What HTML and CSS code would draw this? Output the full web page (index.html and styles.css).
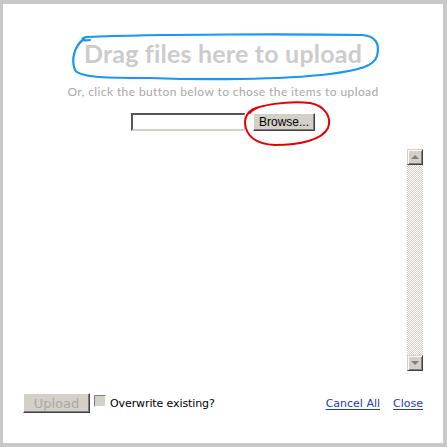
FILE: index.html
```html
<!DOCTYPE html>
<html>
<head>
<meta charset="utf-8">
<link rel="stylesheet" href="styles.css">
</head>
<body>
<div class="panel">
  <h1 class="title">Drag files here to upload</h1>
  <p class="sub">Or, click the button below to chose the items to upload</p>
  <div class="filerow">
    <span class="field"></span>
    <span class="btn browse">Browse...</span>
  </div>
  <div class="list">
    <div class="list-body"></div>
    <div class="sbar">
      <div class="sbtn"><span class="arr up"></span></div>
      <div class="track"></div>
      <div class="sbtn"><span class="arr down"></span></div>
    </div>
  </div>
  <div class="footer">
    <span class="btn upload">Upload</span>
    <span class="check"></span>
    <span class="ow">Overwrite existing?</span>
    <span class="spacer"></span>
    <a class="lnk" href="#">Cancel All</a>
    <a class="lnk" href="#">Close</a>
  </div>
  <svg class="marks" width="447" height="447" viewBox="0 0 447 447">
    <path d="M 90 40 C 82 41, 80 39, 86 37 C 160 34, 300 34, 362 35 C 376 36, 380 44, 377 56 C 374 66, 360 70, 330 74 C 280 80, 200 80, 150 78 C 110 78, 80 78, 75 70 C 71 60, 74 46, 84 39" fill="none" stroke="#1597f3" stroke-width="2.2" stroke-linecap="round"/>
    <path d="M 250 113 C 256 104, 290 101, 310 103 C 325 106, 332 117, 328 128 C 322 140, 300 145, 275 145 C 256 144, 246 136, 245 123 C 245 114, 250 108, 264 106" fill="none" stroke="#e80000" stroke-width="2" stroke-linecap="round"/>
  </svg>
</div>
</body>
</html>
```
FILE: styles.css
```css
html, body {
  margin: 0;
  padding: 0;
  background: #c8c8c8;
}
body {
  width: 447px;
  height: 447px;
  overflow: hidden;
}
.panel {
  position: relative;
  margin: 4px 4px 4px 3px;
  width: 440px;
  height: 439px;
  background: #fff;
  display: flex;
  flex-direction: column;
  align-items: center;
}
.title {
  margin: 34px 0 0 0;
  font-family: "Lato", "DejaVu Sans", sans-serif;
  font-weight: 700;
  font-size: 25px;
  line-height: 30px;
  color: #cccccc;
  letter-spacing: 0.2px;
}
.sub {
  margin: 17px 0 0 0;
  font-family: "Lato", "DejaVu Sans", sans-serif;
  font-size: 12px;
  line-height: 14px;
  color: #a8a8a8;
  letter-spacing: 0.4px;
}
.filerow {
  margin-top: 14px;
  display: flex;
  gap: 8px;
  height: 18px;
}
.field {
  width: 111px;
  height: 14px;
  background: #fff;
  border-top: 2px solid #555;
  border-left: 2px solid #555;
  border-right: 1px solid #d4d0c8;
  border-bottom: 2px solid #d4d0c8;
}
.btn {
  display: flex;
  align-items: center;
  justify-content: center;
  background: #d4d0c8;
  box-sizing: border-box;
  border-top: 1px solid #fff;
  border-left: 1px solid #fff;
  border-right: 1px solid #404040;
  border-bottom: 1px solid #404040;
  box-shadow: inset -1px -1px 0 #808080;
}
.browse {
  width: 62px;
  height: 18px;
  font-family: "Liberation Sans", Arial, sans-serif;
  font-size: 12px;
  color: #000;
}
.list {
  margin-top: 18px;
  width: 400px;
  height: 222px;
  display: flex;
}
.list-body {
  flex: 1;
}
.sbar {
  width: 16px;
  display: flex;
  flex-direction: column;
}
.sbtn {
  width: 16px;
  height: 16px;
  box-sizing: border-box;
  background: #d4d0c8;
  border-top: 1px solid #d4d0c8;
  border-left: 1px solid #d4d0c8;
  border-right: 1px solid #404040;
  border-bottom: 1px solid #404040;
  box-shadow: inset 1px 1px 0 #fff, inset -1px -1px 0 #808080;
  display: flex;
  align-items: center;
  justify-content: center;
}
.arr {
  width: 0;
  height: 0;
  border-left: 4px solid transparent;
  border-right: 4px solid transparent;
}
.arr.up {
  border-bottom: 4px solid #808080;
}
.arr.down {
  border-top: 4px solid #808080;
}
.track {
  flex: 1;
  background-color: #fff;
  background-image: repeating-conic-gradient(#d4d0c8 0 25%, #fff 0 50%);
  background-size: 2px 2px;
}
.footer {
  margin-top: 22px;
  width: 400px;
  height: 20px;
  display: flex;
  align-items: center;
}
.upload {
  width: 67px;
  height: 20px;
  font-family: "DejaVu Sans", sans-serif;
  font-size: 13px;
  color: #a8a8a8;
}
.check {
  margin-left: 4px;
  width: 12px;
  height: 12px;
  box-sizing: border-box;
  background: #d4d0c8;
  border-top: 1px solid #808080;
  border-left: 1px solid #808080;
  border-right: 1px solid #fff;
  border-bottom: 1px solid #fff;
  align-self: flex-start;
  margin-top: 2px;
}
.ow {
  margin-left: 4px;
  font-family: "DejaVu Sans", sans-serif;
  font-size: 11px;
  color: #000;
  letter-spacing: -0.1px;
}
.spacer {
  flex: 1;
}
.lnk {
  font-family: "DejaVu Sans", sans-serif;
  font-size: 11px;
  color: #2438b8;
  text-decoration: underline;
  text-underline-offset: 2px;
  margin-left: 13px;
}
.marks {
  position: absolute;
  left: -3px;
  top: -4px;
  pointer-events: none;
}
```
